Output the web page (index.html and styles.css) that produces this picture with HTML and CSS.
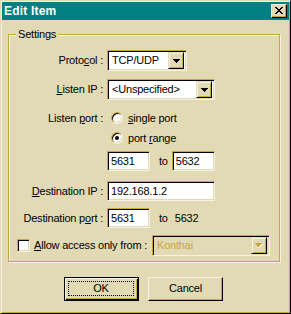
FILE: index.html
```html
<!doctype html>
<html>
<head>
    <meta charset="utf-8">
    <title>Edit Item</title>
    <link rel="stylesheet" href="styles.css">
</head>
<body>
<div class="window">
    <div class="titlebar">
        <span class="title">Edit Item</span>
        <span class="close-btn">
            <svg width="8" height="7" viewBox="0 0 8 7" shape-rendering="crispEdges">
                <path d="M0 0h2v1h-2z M6 0h2v1h-2z M1 1h2v1h-2z M5 1h2v1h-2z M2 2h4v1h-4z M3 3h2v1h-2z M2 4h4v1h-4z M1 5h2v1h-2z M5 5h2v1h-2z M0 6h2v1h-2z M6 6h2v1h-2z" fill="#000"/>
            </svg>
        </span>
    </div>

    <div class="content">
        <div class="group">
            <div class="group-title">Settings</div>

            <div class="row row-protocol">
                <span class="lbl">Proto<u>c</u>ol :</span>
                <div class="combo combo-short sunken">
                    <span class="combo-text">TCP/UDP</span>
                    <span class="combo-btn"><svg width="7" height="4" viewBox="0 0 7 4" shape-rendering="crispEdges"><path d="M0 0h7v1h-1v1h-1v1h-1v1h-1v-1h-1v-1h-1v-1h-1z" fill="#000"/></svg></span>
                </div>
            </div>

            <div class="row row-listen">
                <span class="lbl"><u>L</u>isten IP :</span>
                <div class="combo combo-wide sunken">
                    <span class="combo-text">&lt;Unspecified&gt;</span>
                    <span class="combo-btn"><svg width="7" height="4" viewBox="0 0 7 4" shape-rendering="crispEdges"><path d="M0 0h7v1h-1v1h-1v1h-1v1h-1v-1h-1v-1h-1v-1h-1z" fill="#000"/></svg></span>
                </div>
            </div>

            <div class="row row-radio row-single">
                <span class="lbl">Listen <u>p</u>ort :</span>
                <span class="radio"></span>
                <span class="opt"><u>s</u>ingle port</span>
            </div>

            <div class="row row-radio indent">
                <span class="radio checked"></span>
                <span class="opt">port <u>r</u>ange</span>
            </div>

            <div class="row row-ports indent">
                <span class="field field-short sunken">5631</span>
                <span class="to">to</span>
                <span class="field field-short sunken">5632</span>
            </div>

            <div class="row row-destip">
                <span class="lbl"><u>D</u>estination IP :</span>
                <span class="field field-wide sunken">192.168.1.2</span>
            </div>

            <div class="row row-destport">
                <span class="lbl">Destination p<u>o</u>rt :</span>
                <span class="field field-short sunken">5631</span>
                <span class="to">to</span>
                <span class="to-value">5632</span>
            </div>

            <div class="row row-allow">
                <span class="checkbox sunken"></span>
                <span class="allow-text"><u>A</u>llow access only from :</span>
                <div class="combo combo-disabled sunken">
                    <span class="combo-text">Konthai</span>
                    <span class="combo-btn"><svg width="8" height="5" viewBox="0 0 8 5" shape-rendering="crispEdges"><path d="M1 1h7v1h-1v1h-1v1h-1v1h-1v-1h-1v-1h-1v-1h-1z" fill="#F6F2E2"/><path d="M0 0h7v1h-1v1h-1v1h-1v1h-1v-1h-1v-1h-1v-1h-1z" fill="#C8A83C"/></svg></span>
                </div>
            </div>
        </div>

        <div class="buttons">
            <div class="btn btn-default"><span class="focus">OK</span></div>
            <div class="btn">Cancel</div>
        </div>
    </div>
</div>
</body>
</html>
```

FILE: styles.css
```css
:root {
    --face: #E2DAB4;
    --shadow: #C8A83C;
    --hilite: #F6F2E2;
}

body {
    margin: 0;
    font-family: "Liberation Sans", Arial, sans-serif;
    font-size: 11px;
    line-height: 13px;
    letter-spacing: -0.2px;
    color: #000;
}

u {
    text-decoration-thickness: 1px;
    text-underline-offset: 1px;
}

/* Fensterrahmen */
.window {
    box-sizing: border-box;
    width: 291px;
    height: 314px;
    background: var(--face);
    border: 1px solid;
    border-color: var(--face) #000 #000 var(--face);
    box-shadow: inset 1px 1px 0 var(--hilite), inset -1px -1px 0 var(--shadow);
    padding: 1px;
}

.titlebar {
    height: 18px;
    background: #008080;
    display: flex;
    align-items: flex-start;
}

.title {
    color: #fff;
    font-weight: bold;
    font-size: 12px;
    letter-spacing: 0.2px;
    line-height: 18px;
    padding-left: 2px;
    flex: 1;
}

.close-btn {
    box-sizing: border-box;
    width: 16px;
    height: 14px;
    margin: 2px 2px 0 0;
    background: var(--face);
    border: 1px solid;
    border-color: var(--hilite) #000 #000 var(--hilite);
    box-shadow: inset -1px -1px 0 var(--shadow);
    display: flex;
    align-items: center;
    justify-content: center;
    padding-bottom: 1px;
}

.close-btn svg {
    display: block;
}

/* Gruppenrahmen "Settings" */
.group {
    box-sizing: border-box;
    width: 272px;
    height: 228px;
    margin: 14px 0 0 6px;
    border: 1px solid var(--shadow);
    box-shadow: inset 1px 1px 0 var(--hilite), 1px 1px 0 var(--hilite);
}

.group-title {
    display: table;
    margin: -7px 0 0 7px;
    padding: 0 2px;
    background: var(--face);
}

.row {
    display: flex;
    align-items: center;
}

.lbl {
    width: 94px;
    margin-right: 4px;
    text-align: right;
    white-space: nowrap;
}

.indent {
    padding-left: 98px;
}

.row-protocol { margin-top: 9px; }
.row-listen { margin-top: 8px; }
.row-single { margin-top: 8px; height: 20px; }
.row-radio { height: 20px; }
.row-ports { margin-top: 3px; }
.row-destip { margin-top: 10px; }
.row-destport { margin-top: 7px; }
.row-allow { margin-top: 7px; }

/* vertiefte Felder */
.sunken {
    box-sizing: border-box;
    border: 1px solid;
    border-color: var(--shadow) var(--hilite) var(--hilite) var(--shadow);
    box-shadow: inset 1px 1px 0 #000, inset -1px -1px 0 var(--face);
    background: #fff;
}

.combo {
    height: 21px;
    display: flex;
    align-items: center;
    padding: 1px;
}

.combo-short { width: 80px; }
.combo-wide { width: 108px; }

.combo-text {
    flex: 1;
    padding-left: 3px;
    white-space: nowrap;
}

.combo-btn {
    box-sizing: border-box;
    width: 16px;
    height: 17px;
    margin-right: 1px;
    background: var(--face);
    border: 1px solid;
    border-color: var(--face) #000 #000 var(--face);
    box-shadow: inset 1px 1px 0 var(--hilite), inset -1px -1px 0 var(--shadow);
    display: flex;
    align-items: center;
    justify-content: center;
}

.combo-btn svg {
    display: block;
}

.field {
    height: 20px;
    display: flex;
    align-items: center;
    padding-left: 3px;
}

.field-short { width: 43px; }
.field-wide { width: 108px; }

.to {
    margin: 0 6px 0 9px;
}

.to-value {
    margin-left: 1px;
}

.row-ports .to {
    margin: 0 4px 0 9px;
}

/* Optionsfelder */
.radio {
    box-sizing: border-box;
    width: 12px;
    height: 12px;
    margin-left: 4px;
    border-radius: 50%;
    border: 1px solid;
    border-color: var(--shadow) var(--hilite) var(--hilite) var(--shadow);
    box-shadow: inset 1px 1px 0 #000, inset -1px -1px 0 var(--face);
    background: #fff;
    display: flex;
    align-items: center;
    justify-content: center;
}

.radio.checked::after {
    content: "";
    width: 4px;
    height: 4px;
    border-radius: 50%;
    background: #000;
}

.opt {
    margin-left: 5px;
}

.checkbox {
    width: 13px;
    height: 13px;
    margin-left: 8px;
}

.allow-text {
    margin-left: 4px;
    white-space: nowrap;
}

.combo-disabled {
    width: 118px;
    margin-left: auto;
    margin-right: 9px;
    background: var(--face);
    color: var(--shadow);
}

/* Schaltflächen */
.buttons {
    display: flex;
    gap: 9px;
    margin: 15px 0 0 62px;
}

.btn {
    box-sizing: border-box;
    width: 75px;
    height: 24px;
    border: 1px solid;
    border-color: var(--hilite) #000 #000 var(--hilite);
    box-shadow: inset -1px -1px 0 var(--shadow);
    display: flex;
    align-items: center;
    justify-content: center;
    padding-bottom: 1px;
}

.btn-default {
    border: 1px solid #000;
    box-shadow: inset 1px 1px 0 var(--hilite), inset -1px -1px 0 #000, inset -2px -2px 0 var(--shadow);
    padding: 3px 4px 4px 3px;
}

.focus {
    box-sizing: border-box;
    width: 100%;
    height: 100%;
    border: 1px dotted #000;
    display: flex;
    align-items: center;
    justify-content: center;
}
```
